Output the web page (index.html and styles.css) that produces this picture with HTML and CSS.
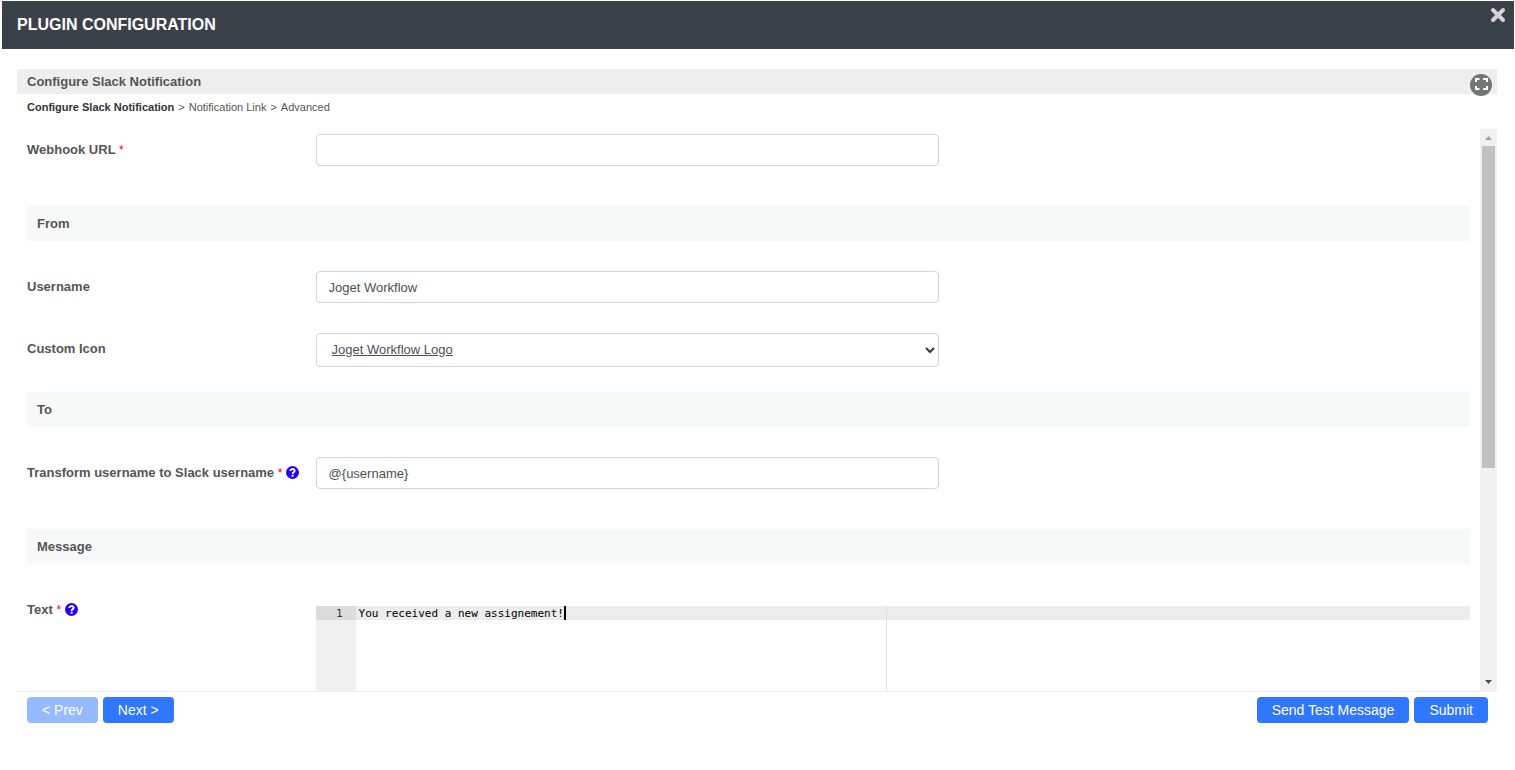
FILE: index.html
```html
<!DOCTYPE html>
<html lang="en">
<head>
<meta charset="utf-8">
<title>Plugin Configuration</title>
<meta name="viewport" content="width=device-width, initial-scale=1">
<link rel="stylesheet" href="styles.css">
</head>
<body>
<main class="dialog">
  <header class="dialog-header">
    <h1 class="dialog-title">PLUGIN CONFIGURATION</h1>
    <button class="close" type="button" aria-label="Close">
      <svg width="16" height="16" viewBox="0 0 16 16"><path d="M3 3L13 13M13 3L3 13" stroke="#d3d4d5" stroke-width="4" stroke-linecap="round"/></svg>
    </button>
  </header>
  <form class="panel">
    <div class="page-bar">
      <h2 class="page-title">Configure Slack Notification</h2>
      <button class="expand" type="button" aria-label="Full screen">
        <svg width="22" height="22" viewBox="0 0 22 22"><circle cx="11" cy="11" r="11" fill="#737475"/><path d="M6 8V5H9.500M13 5H17V8M17 12V15H13M9.500 15H6V12" fill="none" stroke="#fff" stroke-width="2"/></svg>
      </button>
    </div>
    <nav class="steps"><a class="step current" href="#configure">Configure Slack Notification</a><span>&gt;</span><a class="step" href="#link">Notification Link</a><span>&gt;</span><a class="step" href="#advanced">Advanced</a></nav>
    <div class="viewport">
      <div class="fields">
        <div class="row">
          <label class="label" for="webhook">Webhook URL <span class="required">*</span></label>
          <input class="control" id="webhook" type="text">
        </div>
        <h3 class="section">From</h3>
        <div class="row">
          <label class="label" for="username">Username</label>
          <input class="control" id="username" type="text" value="Joget Workflow">
        </div>
        <div class="row row-select">
          <label class="label" for="icon">Custom Icon</label>
          <div class="select-box">
            <select class="control select" id="icon"><option>Joget Workflow Logo</option></select>
            <svg class="chevron" width="10" height="8" viewBox="0 0 10 8"><path d="M1 2L5 6L9 2" fill="none" stroke="#343a40" stroke-width="2"/></svg>
          </div>
        </div>
        <h3 class="section">To</h3>
        <div class="row">
          <label class="label" for="transform">Transform username to Slack username <span class="required">*</span>
            <svg class="help" width="13" height="13" viewBox="0 0 12 12"><circle cx="6" cy="6" r="6" fill="#20f"/><path d="M4 4.600C4.100 2.300 8 2.200 8 4.400C8 5.900 6.100 5.600 6.100 7.300" fill="none" stroke="#fff" stroke-width="1.700"/><rect x="5.200" y="8.100" width="1.800" height="1.800" fill="#fff"/></svg>
          </label>
          <input class="control" id="transform" type="text" value="@{username}">
        </div>
        <h3 class="section">Message</h3>
        <div class="row">
          <label class="label" for="message">Text <span class="required">*</span>
            <svg class="help" width="13" height="13" viewBox="0 0 12 12"><circle cx="6" cy="6" r="6" fill="#20f"/><path d="M4 4.600C4.100 2.300 8 2.200 8 4.400C8 5.900 6.100 5.600 6.100 7.300" fill="none" stroke="#fff" stroke-width="1.700"/><rect x="5.200" y="8.100" width="1.800" height="1.800" fill="#fff"/></svg>
          </label>
          <div class="editor">
            <div class="gutter"><div class="line-number">1</div></div>
            <div class="code">
              <textarea class="code-input" id="message" spellcheck="false">You received a new assignement!</textarea>
              <span class="margin-line"></span>
              <span class="caret"></span>
            </div>
          </div>
        </div>
      </div>
      <div class="scrollbar" aria-hidden="true">
        <svg class="arrow" viewBox="0 0 17 17"><path d="M5 11L8.500 7L12 11Z" fill="#a3a3a3"/></svg>
        <div class="track"><div class="thumb"></div></div>
        <svg class="arrow" viewBox="0 0 17 17"><path d="M5 6L8.500 10L12 6Z" fill="#505050"/></svg>
      </div>
    </div>
    <footer class="actions">
      <button class="button" type="button" disabled>&lt; Prev</button>
      <button class="button" type="button">Next &gt;</button>
      <button class="button push" type="button">Send Test Message</button>
      <button class="button" type="submit">Submit</button>
    </footer>
  </form>
</main>
</body>
</html>
```
FILE: styles.css
```css
* { box-sizing: border-box; }

body {
  margin: 0;
  background: #fff;
  color: #555;
  font: 13px/20px "Liberation Sans", Arial, sans-serif;
}

h1, h2, h3 { margin: 0; }

button, input, select, textarea { font: inherit; }

.dialog {
  display: flex;
  flex-direction: column;
  height: 100vh;
  padding: 1px 1px 0 2px;
}

.dialog-header {
  display: flex;
  align-items: flex-start;
  justify-content: space-between;
  flex: none;
  height: 48px;
  padding: 0 8px 0 15px;
  background: #3a4149;
}

.dialog-title {
  color: #fff;
  font-size: 16px;
  line-height: 48px;
}

.close {
  display: flex;
  margin-top: 6px;
  padding: 0;
  border: 0;
  background: none;
}

.panel {
  display: flex;
  flex: 1;
  flex-direction: column;
  min-height: 0;
  margin: 20px 17px 0 15px;
}

.page-bar {
  display: flex;
  flex: none;
  justify-content: space-between;
  height: 25px;
  padding: 0 5px 0 10px;
  background: #eee;
}

.page-title {
  font-size: 13px;
  line-height: 25px;
}

.expand {
  flex: none;
  width: 22px;
  height: 22px;
  margin-top: 5px;
  padding: 0;
  border: 0;
  background: none;
}

.expand svg { display: block; }

.steps {
  display: flex;
  flex: none;
  gap: 4px;
  height: 35px;
  padding: 3px 10px;
  font-size: 11px;
}

.step {
  color: #555;
  text-decoration: none;
}

.current {
  color: #333;
  font-weight: bold;
}

.viewport {
  display: flex;
  flex: 1;
  min-height: 0;
  border-bottom: 1px solid #eee;
}

.fields {
  flex: 1;
  min-width: 0;
  padding: 5px 10px 0;
  overflow: hidden;
}

.row {
  display: grid;
  grid-template-columns: 1fr 4fr;
  align-items: start;
  margin-bottom: 30px;
}

.row-select { margin-bottom: 25px; }

.label {
  padding-top: 6px;
  font-weight: bold;
  white-space: nowrap;
}

.required {
  color: #f00;
  font-size: 12px;
  font-weight: normal;
}

.help { vertical-align: -2px; }

.control {
  width: 54%;
  height: 32px;
  padding: 0 12px;
  border: 1px solid #ced4da;
  border-radius: 4px;
  background: #fff;
  color: #495057;
}

.select-box {
  position: relative;
  width: 54%;
}

.select {
  display: block;
  width: 100%;
  height: 34px;
  padding: 0 15px;
  appearance: none;
  text-decoration: underline;
}

.chevron {
  position: absolute;
  top: 13px;
  right: 4px;
  pointer-events: none;
}

.section {
  margin: 40px 0 30px;
  padding: 0 10px;
  background: #f7f9f9;
  font-size: 13px;
  line-height: 35px;
}

.row-select + .section { margin-top: 25px; }

.editor {
  display: flex;
  height: 200px;
  margin-top: 12px;
  font: 11px/14px "DejaVu Sans Mono", monospace;
}

.gutter {
  flex: none;
  width: 40px;
  background: #f0f0f0;
}

.line-number {
  height: 14px;
  padding: 1px 13px 0 0;
  background: #dcdcdc;
  color: #333;
  text-align: right;
}

.code {
  position: relative;
  flex: 1;
  background: linear-gradient(#ececec, #ececec) top / 100% 14px no-repeat;
}

.code-input {
  display: block;
  width: 100%;
  height: 100%;
  padding: 1px 3px;
  border: 0;
  outline: 0;
  background: none;
  color: #000;
  resize: none;
}

.margin-line {
  position: absolute;
  top: 0;
  bottom: 0;
  left: calc(80ch + 1px);
  width: 1px;
  background: #dedede;
}

.caret {
  position: absolute;
  top: 0;
  left: calc(31ch + 3px);
  width: 2px;
  height: 14px;
  background: #000;
}

.scrollbar {
  display: flex;
  flex: none;
  flex-direction: column;
  width: 17px;
  background: #f1f1f1;
}

.arrow {
  flex: none;
  width: 17px;
  height: 17px;
}

.track {
  flex: 1;
  padding: 0 2px;
}

.thumb {
  height: 61%;
  background: #c1c1c1;
}

.actions {
  display: flex;
  flex: none;
  gap: 5px;
  height: 78px;
  padding: 5px 9px 0 10px;
}

.button {
  height: 26px;
  padding: 0 15px;
  border: 0;
  border-radius: 4px;
  background: #3077ff;
  color: #fff;
  font-size: 14px;
}

.button:disabled { opacity: 0.5; }

.push { margin-left: auto; }
```
